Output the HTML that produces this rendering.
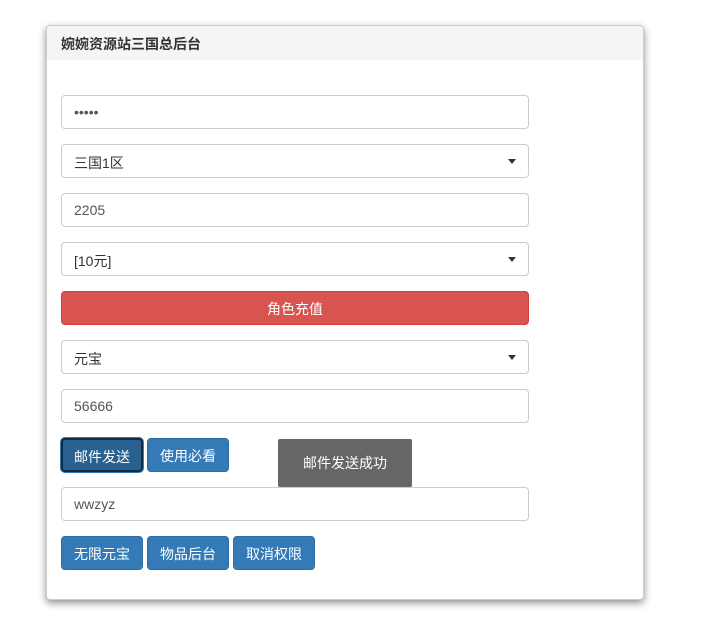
<!DOCTYPE html>
<html><head><meta charset="utf-8"><style>
*{box-sizing:border-box}
body{margin:0;width:717px;height:639px;background:#fff;font-family:"Liberation Sans","Noto Sans CJK SC",sans-serif;font-size:14px;color:#333;position:relative}
.panel{position:absolute;left:46px;top:25px;width:598px;height:575px;border:1px solid #ccc;border-radius:4px;box-shadow:0 3px 8px rgba(0,0,0,.45);background:#fff}
.hd{height:34px;background:#f5f5f5;padding:8px 14px;font-size:14px;font-weight:bold;color:#333;border-radius:4px 4px 0 0}
.f{position:absolute;left:14px;width:468px;height:34px;border:1px solid #ccc;border-radius:4px;padding:8px 12px 6px;color:#555;background:#fff}
.f.s:after{content:"";position:absolute;right:12px;top:14px;border-left:4px solid transparent;border-right:4px solid transparent;border-top:5px solid #333}
.red{position:absolute;left:14px;width:468px;height:34px;background:#d9534f;border:1px solid #d43f3a;border-radius:4px;color:#fff;text-align:center;padding-top:7px}
.b{position:absolute;width:82px;height:34px;background:#337ab7;border:1px solid #2e6da4;border-radius:4px;color:#fff;text-align:center;padding-top:7px}
.toast{position:absolute;left:231px;top:413px;width:134px;height:48px;background:#666;color:#fff;text-align:center;padding-top:14px;border-radius:2px}
</style></head><body>
<div class="panel">
<div class="hd">婉婉资源站三国总后台</div>
<div class="f" style="top:69px">•••••</div>
<div class="f s" style="top:118px;color:#333">三国1区</div>
<div class="f" style="top:167px">2205</div>
<div class="f s" style="top:216px;color:#333">[10元]</div>
<div class="red" style="top:265px">角色充值</div>
<div class="f s" style="top:314px;color:#333">元宝</div>
<div class="f" style="top:363px">56666</div>
<div class="b" style="left:14px;top:412px;background:#286090;border:2px solid #122b40;box-shadow:0 0 0 1px #337ab7">邮件发送</div>
<div class="b" style="left:100px;top:412px">使用必看</div>
<div class="toast">邮件发送成功</div>
<div class="f" style="top:461px">wwzyz</div>
<div class="b" style="left:14px;top:510px">无限元宝</div>
<div class="b" style="left:100px;top:510px">物品后台</div>
<div class="b" style="left:186px;top:510px">取消权限</div>
</div>
</body></html>
